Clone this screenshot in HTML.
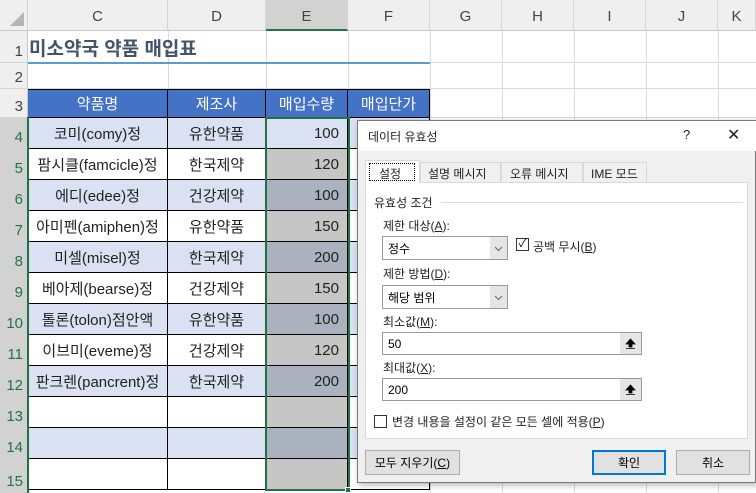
<!DOCTYPE html>
<html><head><meta charset="utf-8"><style>
*{box-sizing:border-box;margin:0;padding:0}
body{width:756px;height:493px;overflow:hidden;background:#fff;font-family:"Liberation Sans","Noto Sans CJK KR",sans-serif;position:relative}
.a{position:absolute}
.ch{position:absolute;top:0;height:31px;background:#efefef;border-right:1px solid #d4d4d4;border-bottom:1px solid #c8c8c8;text-align:center;line-height:34px;font-size:15px;color:#444}
.rh{position:absolute;left:0;width:28px;background:#efefef;border-bottom:1px solid #d4d4d4;border-right:1px solid #c8c8c8;font-size:15px;color:#444;text-align:right;padding-right:4px;display:flex;align-items:flex-end;justify-content:flex-end;padding-bottom:2px}
.c{position:absolute;font-size:15px;color:#222;display:flex;align-items:center;justify-content:center;border-right:1px solid #000;border-bottom:1px solid #000}
.gl{position:absolute;background:#dadada}
.d{font-size:12px;color:#222;position:absolute}
u{text-decoration:underline}
.inp{position:absolute;background:#fff;border:1px solid #999;font-size:12px;padding-left:5px;display:flex;align-items:center}
.btn{position:absolute;background:#e1e1e1;border:1px solid #adadad;font-size:12px;display:flex;align-items:center;justify-content:center}
.dd{position:absolute;width:17px;height:22px;background:#e5e5e5}
.up{position:absolute;width:21px;height:21px;background:#e5e5e5}
</style></head><body>
<div class="gl" style="left:430px;top:31px;width:1px;height:462px"></div>
<div class="gl" style="left:502px;top:31px;width:1px;height:462px"></div>
<div class="gl" style="left:574px;top:31px;width:1px;height:462px"></div>
<div class="gl" style="left:646px;top:31px;width:1px;height:462px"></div>
<div class="gl" style="left:718px;top:31px;width:1px;height:462px"></div>
<div class="gl" style="left:168px;top:31px;width:1px;height:58px"></div>
<div class="gl" style="left:266px;top:31px;width:1px;height:58px"></div>
<div class="gl" style="left:348px;top:31px;width:1px;height:58px"></div>
<div class="gl" style="left:28px;top:88px;width:728px;height:1px"></div>
<div class="gl" style="left:430px;top:62px;width:326px;height:1px"></div>
<div class="gl" style="left:430px;top:117px;width:326px;height:1px"></div>
<div class="ch" style="left:0;width:28px"><svg width="28" height="31"><path d="M10 26 L24 26 L24 12 Z" fill="#b5b5b5"/></svg></div>
<div class="ch" style="left:28px;width:140px">C</div>
<div class="ch" style="left:168px;width:98px">D</div>
<div class="ch" style="left:266px;width:82px;background:#d2d2d2;border-bottom:2px solid #217346">E</div>
<div class="ch" style="left:348px;width:82px">F</div>
<div class="ch" style="left:430px;width:72px">G</div>
<div class="ch" style="left:502px;width:72px">H</div>
<div class="ch" style="left:574px;width:72px">I</div>
<div class="ch" style="left:646px;width:72px">J</div>
<div class="ch" style="left:718px;width:38px">K</div>
<div class="rh" style="top:31px;height:32px">1</div>
<div class="rh" style="top:63px;height:26px">2</div>
<div class="rh" style="top:89px;height:29px">3</div>
<div class="rh" style="top:118px;height:31px;background:#d2d2d2;color:#217346">4</div>
<div class="rh" style="top:149px;height:31px;background:#d2d2d2;color:#217346">5</div>
<div class="rh" style="top:180px;height:31px;background:#d2d2d2;color:#217346">6</div>
<div class="rh" style="top:211px;height:31px;background:#d2d2d2;color:#217346">7</div>
<div class="rh" style="top:242px;height:31px;background:#d2d2d2;color:#217346">8</div>
<div class="rh" style="top:273px;height:31px;background:#d2d2d2;color:#217346">9</div>
<div class="rh" style="top:304px;height:31px;background:#d2d2d2;color:#217346">10</div>
<div class="rh" style="top:335px;height:31px;background:#d2d2d2;color:#217346">11</div>
<div class="rh" style="top:366px;height:31px;background:#d2d2d2;color:#217346">12</div>
<div class="rh" style="top:397px;height:31px;background:#d2d2d2;color:#217346">13</div>
<div class="rh" style="top:428px;height:31px;background:#d2d2d2;color:#217346">14</div>
<div class="rh" style="top:459px;height:34px;background:#d2d2d2;color:#217346">15</div>
<div class="a" style="left:29px;top:34px;font-size:19px;font-weight:bold;color:#44546a">미소약국 약품 매입표</div>
<div class="a" style="left:28px;top:62px;width:402px;height:2px;background:#5b9bd5"></div>
<div class="c" style="left:28px;top:89px;width:140px;height:29px;background:#4472c4;color:#fff;border-top:1px solid #000">약품명</div>
<div class="c" style="left:168px;top:89px;width:98px;height:29px;background:#4472c4;color:#fff;border-top:1px solid #000">제조사</div>
<div class="c" style="left:266px;top:89px;width:82px;height:29px;background:#4472c4;color:#fff;border-top:1px solid #000">매입수량</div>
<div class="c" style="left:348px;top:89px;width:82px;height:29px;background:#4472c4;color:#fff;border-top:1px solid #000">매입단가</div>
<div id="rows"></div>
<script>
var d=[["코미(comy)정","유한약품","100"],["팜시클(famcicle)정","한국제약","120"],["에디(edee)정","건강제약","100"],["아미펜(amiphen)정","유한약품","150"],["미셀(misel)정","한국제약","200"],["베아제(bearse)정","건강제약","150"],["톨론(tolon)점안액","유한약품","100"],["이브미(eveme)정","건강제약","120"],["판크렌(pancrent)정","한국제약","200"],["","",""],["","",""],["","",""]];
var h="";
for(var i=0;i<12;i++){var t=118+i*31,b=i%2==0,bg=b?"#d9e1f2":"#fff",eb=i==0?"#d9e1f2":(b?"#aab1bf":"#c6c6c6");
h+='<div class="c" style="left:28px;top:'+t+'px;width:140px;height:31px;background:'+bg+'">'+d[i][0]+'</div>';
h+='<div class="c" style="left:168px;top:'+t+'px;width:98px;height:31px;background:'+bg+'">'+d[i][1]+'</div>';
h+='<div class="c" style="left:266px;top:'+t+'px;width:82px;height:31px;background:'+eb+';justify-content:flex-end;padding-right:8px">'+d[i][2]+'</div>';
h+='<div class="c" style="left:348px;top:'+t+'px;width:82px;height:31px;background:'+(b?"#d9e1f2":"#fff")+'"></div>';}
document.getElementById("rows").innerHTML=h;
</script>
<div class="a" style="left:27px;top:117px;width:2px;height:376px;background:#217346"></div>
<div class="a" style="left:265px;top:117px;width:85px;height:374px;border:2px solid #217346"></div>
<div class="a" style="left:345px;top:487px;width:6px;height:6px;background:#217346;border:1px solid #fff"></div>
<div class="a" style="left:357px;top:120px;width:399px;height:363px;background:#f0f0f0;border:1px solid #7a7a7a;box-shadow:2px 2px 6px rgba(0,0,0,.3)">
 <div class="a" style="left:0;top:0;width:398px;height:30px;background:#fff"></div>
 <div class="d" style="left:10px;top:7px">데이터 유효성</div>
 <div class="d" style="left:325px;top:6px;font-size:13px">?</div>
 <div class="d" style="left:369px;top:4px;font-size:16px">✕</div>
 <div class="a" style="left:7px;top:61px;width:383px;height:257px;background:#fff;border:1px solid #d9d9d9"></div>
 <div class="a" style="left:7px;top:39px;width:55px;height:23px;background:#fff;border:1px solid #d9d9d9;border-bottom:none"></div>
 <div class="a" style="left:11px;top:42px;width:46px;height:18px;border:1px dotted #000"></div>
 <div class="d" style="left:21px;top:44px">설정</div>
 <div class="a" style="left:62px;top:41px;width:81px;height:21px;border:1px solid #d9d9d9;background:#f0f0f0"></div><div class="d" style="left:70px;top:44px">설명 메시지</div>
 <div class="a" style="left:143px;top:41px;width:82px;height:21px;border:1px solid #d9d9d9;background:#f0f0f0"></div><div class="d" style="left:152px;top:44px">오류 메시지</div>
 <div class="a" style="left:225px;top:41px;width:64px;height:21px;border:1px solid #d9d9d9;background:#f0f0f0"></div><div class="d" style="left:233px;top:44px">IME 모드</div>
 <div class="d" style="left:16px;top:73px">유효성 조건</div>
 <div class="a" style="left:83px;top:81px;width:302px;height:1px;background:#dcdcdc"></div>
 <div class="d" style="left:25px;top:96px">제한 대상(<u>A</u>):</div>
 <div class="inp" style="left:24px;top:115px;width:126px;height:24px">정수</div>
 <div class="dd" style="left:132px;top:116px"><svg width="17" height="22"><path d="M5 10 L8.5 13.5 L12 10" stroke="#666" fill="none"/></svg></div>
 <div class="a" style="left:158px;top:117px;width:13px;height:13px;border:1px solid #333;background:#fff;font-size:11px;line-height:11px;text-align:center">✓</div>
 <div class="d" style="left:175px;top:117px">공백 무시(<u>B</u>)</div>
 <div class="d" style="left:25px;top:144px">제한 방법(<u>D</u>):</div>
 <div class="inp" style="left:24px;top:164px;width:126px;height:24px">해당 범위</div>
 <div class="dd" style="left:132px;top:165px"><svg width="17" height="22"><path d="M5 10 L8.5 13.5 L12 10" stroke="#666" fill="none"/></svg></div>
 <div class="d" style="left:25px;top:192px">최소값(<u>M</u>):</div>
 <div class="inp" style="left:24px;top:211px;width:260px;height:23px">50</div>
 <div class="up" style="left:262px;top:212px"><svg width="21" height="21"><path d="M10.5 6 L15 11 L12 11 L12 14 L9 14 L9 11 L6 11 Z M6 15.5 H15" fill="#000" stroke="#000" stroke-width=".8"/></svg></div>
 <div class="d" style="left:25px;top:238px">최대값(<u>X</u>):</div>
 <div class="inp" style="left:24px;top:257px;width:260px;height:23px">200</div>
 <div class="up" style="left:262px;top:258px"><svg width="21" height="21"><path d="M10.5 6 L15 11 L12 11 L12 14 L9 14 L9 11 L6 11 Z M6 15.5 H15" fill="#000" stroke="#000" stroke-width=".8"/></svg></div>
 <div class="a" style="left:16px;top:294px;width:13px;height:13px;border:1px solid #333;background:#fff"></div>
 <div class="d" style="left:34px;top:292px">변경 내용을 설정이 같은 모든 셀에 적용(<u>P</u>)</div>
 <div class="btn" style="left:7px;top:329px;width:95px;height:25px">모두 지우기(<u>C</u>)</div>
 <div class="btn" style="left:234px;top:329px;width:74px;height:25px;border:2px solid #0078d7">확인</div>
 <div class="btn" style="left:318px;top:329px;width:74px;height:25px">취소</div>
</div>
</body></html>
